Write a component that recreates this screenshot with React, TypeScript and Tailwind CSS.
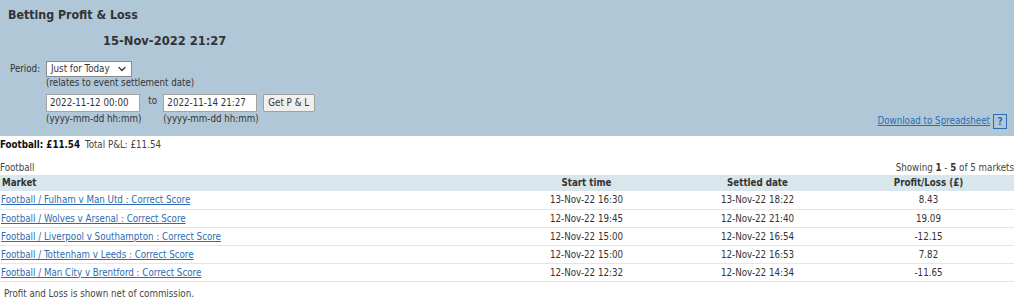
import React from 'react';
import { ChevronDown } from 'lucide-react';

const markets = [
  { name: 'Football / Fulham v Man Utd : Correct Score', start: '13-Nov-22 16:30', settled: '13-Nov-22 18:22', pl: '8.43' },
  { name: 'Football / Wolves v Arsenal : Correct Score', start: '12-Nov-22 19:45', settled: '12-Nov-22 21:40', pl: '19.09' },
  { name: 'Football / Liverpool v Southampton : Correct Score', start: '12-Nov-22 15:00', settled: '12-Nov-22 16:54', pl: '-12.15' },
  { name: 'Football / Tottenham v Leeds : Correct Score', start: '12-Nov-22 15:00', settled: '12-Nov-22 16:53', pl: '7.82' },
  { name: 'Football / Man City v Brentford : Correct Score', start: '12-Nov-22 12:32', settled: '12-Nov-22 14:34', pl: '-11.65' },
];

const DateInput = ({ value }: { value: string }) => (
  <div className="w-[94px] h-[18px] bg-white border border-[#a4a4a4] pl-[3px] leading-[16px] whitespace-nowrap overflow-hidden">{value}</div>
);

export default function App() {
  return (
    <div className="w-[1014px] text-[9.7px] text-[#333] whitespace-nowrap font-['DejaVu_Sans_Condensed','DejaVu_Sans',sans-serif]">
      {/* Filter panel */}
      <div className="bg-[#b0c7d8] h-[136px] pl-2 pt-[7px] pr-[7px]">
        <h1 className="h-4 leading-4 text-[12.3px] font-bold">Betting Profit &amp; Loss</h1>
        <div className="mt-[9px] h-[18px] leading-[18px] pl-[95px] text-[12.8px] font-bold">15-Nov-2022 21:27</div>

        <div className="flex items-end justify-between">
          <div className="flex mt-[11px]">
            <div className="w-[38px] pl-[2px] h-4 leading-4">Period:</div>
            <div>
              <div className="w-[86px] h-4 bg-white border border-[#8a8a8a] flex items-center justify-between pl-[4px] pr-[3px] leading-[14px]">
                <span>Just for Today</span>
                <ChevronDown className="w-3 h-3 text-[#333]" strokeWidth={2.5} />
              </div>
              <div className="h-3 leading-3">(relates to event settlement date)</div>
              <div className="flex items-start mt-[5px]">
                <div>
                  <DateInput value="2022-11-12 00:00" />
                  <div className="mt-[1px] h-3 leading-3">(yyyy-mm-dd hh:mm)</div>
                </div>
                <div className="w-[22px] pl-[7px] leading-[14px]">to</div>
                <div>
                  <DateInput value="2022-11-14 21:27" />
                  <div className="mt-[1px] h-3 leading-3">(yyyy-mm-dd hh:mm)</div>
                </div>
                <button className="ml-[4px] w-[52px] h-[18px] bg-[#efefef] border border-[#a0a0a0] rounded-[2px] leading-[16px] text-[#333]">Get P &amp; L</button>
              </div>
            </div>
          </div>
          <div className="flex items-center mb-[-4px]">
            <a className="text-[#2d6bb3] underline leading-4">Download to Spreadsheet</a>
            <span className="ml-[3px] w-[14px] h-[15px] border border-[#2d6bb3] text-[#2d6bb3] font-bold text-[10px] leading-[13px] text-center">?</span>
          </div>
        </div>
      </div>

      {/* Summary */}
      <div className="h-[15px] leading-[15px] mt-[1px]">
        <span className="font-bold text-[#111]">Football: £11.54</span>
        <span className="ml-[5px] text-[#444]">Total P&amp;L: £11.54</span>
      </div>

      <div className="flex justify-between mt-[8px] h-[15px] leading-[15px] text-[#444]">
        <span>Football</span>
        <span>Showing <b className="text-[#333]">1</b> - <b className="text-[#333]">5</b> of 5 markets</span>
      </div>

      <table className="w-[1014px] table-fixed border-collapse">
        <colgroup>
          <col className="w-[501px]" />
          <col className="w-[171px]" />
          <col className="w-[171px]" />
          <col className="w-[171px]" />
        </colgroup>
        <thead>
          <tr className="bg-[#d9e6eb] h-4">
            <th className="text-left font-bold pl-[2px] leading-4">Market</th>
            <th className="text-center font-bold leading-4">Start time</th>
            <th className="text-center font-bold leading-4">Settled date</th>
            <th className="text-center font-bold leading-4">Profit/Loss (£)</th>
          </tr>
        </thead>
        <tbody>
          {markets.map((m) => (
            <tr key={m.name} className="h-[18px] border-b border-[#e6e6e6]">
              <td className="pl-[1px] leading-[17px]">
                <a className="text-[#2d6bb3] underline">{m.name}</a>
              </td>
              <td className="text-center leading-[17px]">{m.start}</td>
              <td className="text-center leading-[17px]">{m.settled}</td>
              <td className="text-center leading-[17px]">{m.pl}</td>
            </tr>
          ))}
        </tbody>
      </table>

      <p className="mt-[5px] pl-1 h-[14px] leading-[14px] text-[#444]">Profit and Loss is shown net of commission.</p>
    </div>
  );
}
